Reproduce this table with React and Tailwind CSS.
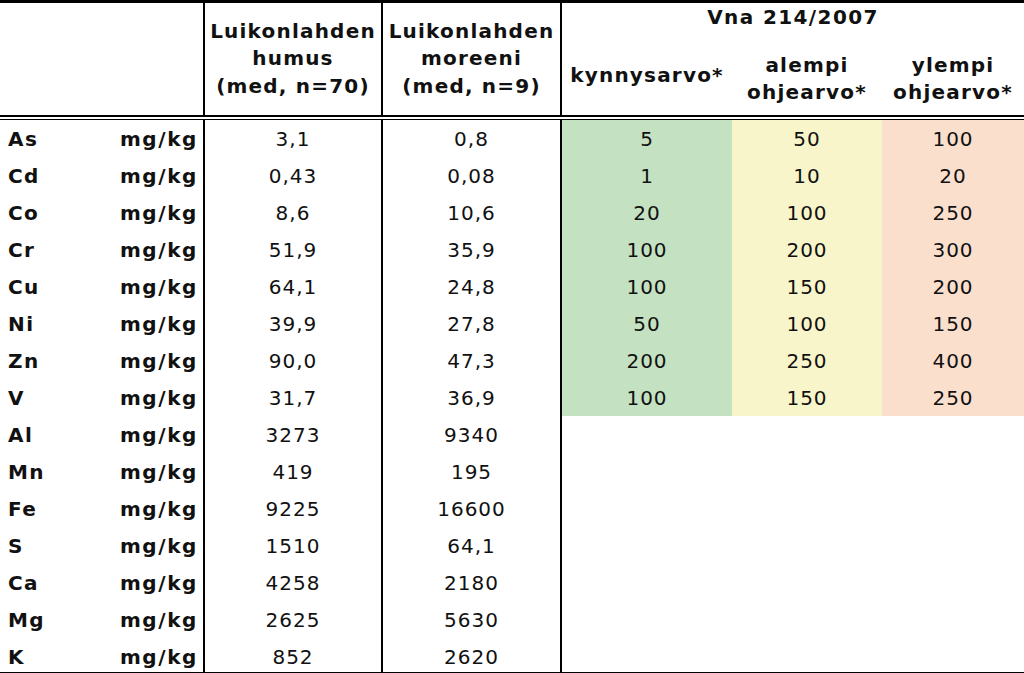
const rows = [
  ['As', '3,1', '0,8', '5', '50', '100'],
  ['Cd', '0,43', '0,08', '1', '10', '20'],
  ['Co', '8,6', '10,6', '20', '100', '250'],
  ['Cr', '51,9', '35,9', '100', '200', '300'],
  ['Cu', '64,1', '24,8', '100', '150', '200'],
  ['Ni', '39,9', '27,8', '50', '100', '150'],
  ['Zn', '90,0', '47,3', '200', '250', '400'],
  ['V', '31,7', '36,9', '100', '150', '250'],
  ['Al', '3273', '9340'],
  ['Mn', '419', '195'],
  ['Fe', '9225', '16600'],
  ['S', '1510', '64,1'],
  ['Ca', '4258', '2180'],
  ['Mg', '2625', '5630'],
  ['K', '852', '2620'],
]

const cols = 'grid grid-cols-[100px_103px_178px_179px_172px_150px_142px]'

function HeadCell({ children, className = '' }) {
  return (
    <div className={`flex flex-col items-center justify-center text-center font-bold leading-[27.5px] tracking-[1.2px] ${className}`}>
      {children}
    </div>
  )
}

export default function App() {
  return (
    <div className="w-[1024px] h-[673px] overflow-hidden bg-white text-[#111] font-['DejaVu_Sans',_Verdana,_sans-serif] text-[20px] tracking-[1px]">
      <div className="border-t-[3px] border-black h-[115px] grid grid-cols-[203px_178px_179px_464px]">
        <div />
        <HeadCell className="border-l-2 border-black">
          <span>Luikonlahden</span>
          <span>humus</span>
          <span>(med, n=70)</span>
        </HeadCell>
        <HeadCell className="border-l-2 border-black">
          <span>Luikonlahden</span>
          <span>moreeni</span>
          <span>(med, n=9)</span>
        </HeadCell>
        <div className="border-l-2 border-black flex flex-col">
          <div className="h-[40px] text-center font-bold leading-[29px] tracking-[1.4px]">Vna 214/2007</div>
          <div className="flex-1 grid grid-cols-[170px_150px_142px]">
            <HeadCell className="pb-[6px]">
              <span>kynnysarvo*</span>
            </HeadCell>
            <HeadCell>
              <span>alempi</span>
              <span>ohjearvo*</span>
            </HeadCell>
            <HeadCell>
              <span>ylempi</span>
              <span>ohjearvo*</span>
            </HeadCell>
          </div>
        </div>
      </div>

      <div className="h-[5px] border-t-2 border-b border-black" />

      <div className="border-b border-black">
        {rows.map(([el, a, b, k, lo, hi], i) => {
          const last = i === rows.length - 1
          const pad = last ? 'pt-[3px]' : ''
          return (
            <div key={el} className={`${cols} items-stretch ${last ? 'h-[34px]' : 'h-[37px]'}`}>
              <div className={`flex items-center pl-2 font-bold tracking-[1.4px] ${pad}`}>{el}</div>
              <div className={`flex items-center justify-end pr-[5px] font-bold tracking-[1.6px] ${pad}`}>mg/kg</div>
              <div className={`flex items-center justify-center border-l-2 border-black ${pad}`}>{a}</div>
              <div className={`flex items-center justify-center border-l-2 border-black ${pad}`}>{b}</div>
              <div className={`flex items-center justify-center border-l-2 border-black ${k ? 'bg-[#c4e1c1]' : ''}`}>{k}</div>
              <div className={`flex items-center justify-center ${lo ? 'bg-[#f9f5ca]' : ''}`}>{lo}</div>
              <div className={`flex items-center justify-center ${hi ? 'bg-[#fbdfcd]' : ''}`}>{hi}</div>
            </div>
          )
        })}
      </div>
    </div>
  )
}
